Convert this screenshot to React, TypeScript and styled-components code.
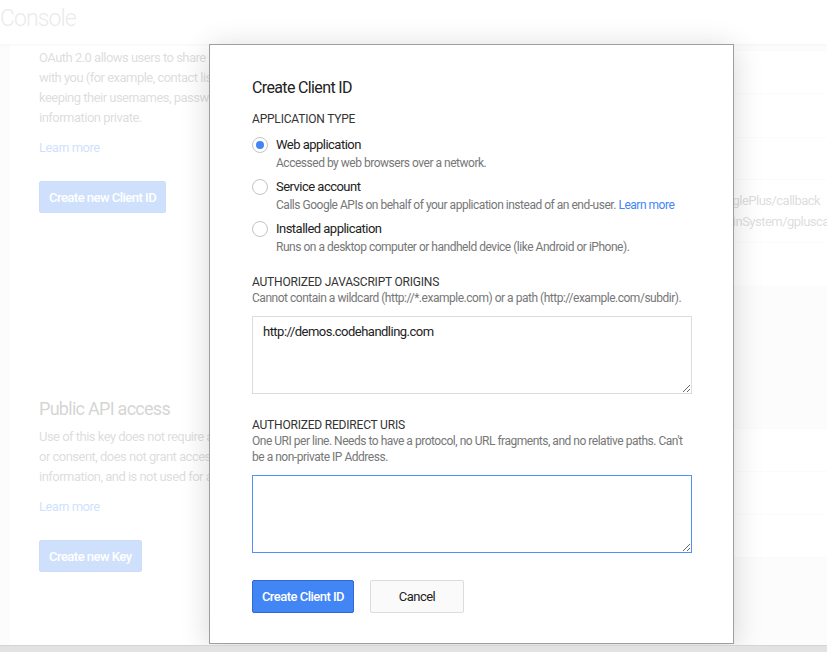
import React, { useState } from 'react';
import styled, { createGlobalStyle } from 'styled-components';

const GlobalStyle = createGlobalStyle`
  html, body {
    margin: 0;
    padding: 0;
    height: 100%;
    overflow: hidden;
  }
  body {
    font-family: Roboto, "Liberation Sans", Arial, sans-serif;
    background: #fff;
    color: #333;
  }
  * {
    letter-spacing: -0.04em;
  }
  #root {
    height: 100%;
  }
`;

const Screen = styled.div`
  height: 100vh;
  display: flex;
  flex-direction: column;
`;

const Viewport = styled.div`
  position: relative;
  flex: 1;
  display: flex;
  flex-direction: column;
  overflow: hidden;
`;

const ScrollBar = styled.div`
  height: 6px;
  background: #e2e2e2;
  border-top: 1px solid #d4d4d4;
`;

const Header = styled.header`
  height: 44px;
  flex: none;
  display: flex;
  align-items: center;
  background: #fff;
  box-shadow: 0 1px 3px rgba(0, 0, 0, 0.12);
  position: relative;
  z-index: 1;
`;

const Brand = styled.div`
  font-weight: 300;
  font-size: 23px;
  color: #aaa;
  margin-top: -8px;
`;

const Main = styled.main`
  flex: 1;
  display: flex;
  background: #f3f3f3;
`;

const LeftColumn = styled.section`
  width: 230px;
  box-sizing: border-box;
  flex: none;
  margin-left: 10px;
  background: #fff;
  padding-left: 29px;
  display: flex;
  flex-direction: column;
`;

const Block = styled.div<{ $top: number }>`
  margin-top: ${(p) => p.$top}px;
  width: 260px;
`;

const BlockTitle = styled.h3`
  margin: 0 0 6px;
  font-size: 18px;
  font-weight: 400;
  color: #555;
  line-height: 24px;
`;

const BlockText = styled.p`
  margin: 0;
  font-size: 13px;
  line-height: 20px;
  color: #777;
  white-space: nowrap;
`;

const BlockLink = styled.a`
  display: block;
  margin-top: 10px;
  font-size: 13px;
  line-height: 20px;
  color: #4285f4;
  text-decoration: none;
`;

const BlockButton = styled.button`
  margin-top: 23px;
  height: 32px;
  padding: 0 9px;
  border: 1px solid #3b78e7;
  border-radius: 2px;
  background: #4285f4;
  color: #fff;
  font-family: inherit;
  font-weight: 500;
  font-size: 13px;
`;

const RightPanel = styled.section`
  flex: 1;
  display: flex;
  flex-direction: column;
`;

const TableCard = styled.div<{ $top: number }>`
  margin-top: ${(p) => p.$top}px;
  background: #fff;
  border-bottom: 1px solid #eee;
`;

const TableRow = styled.div<{ $h: number }>`
  height: ${(p) => p.$h}px;
  box-sizing: border-box;
  border-top: 1px solid #eee;
  display: flex;
  align-items: center;
  padding-left: 311px;
`;

const Cell = styled.div`
  font-size: 13px;
  line-height: 21px;
  color: #777;
  white-space: nowrap;
`;

const Backdrop = styled.div`
  position: absolute;
  inset: 0;
  background: rgba(255, 255, 255, 0.75);
  z-index: 5;
`;

const Dialog = styled.div`
  position: absolute;
  left: 209px;
  top: 44px;
  width: 525px;
  height: 600px;
  box-sizing: border-box;
  background: #fff;
  border: 1px solid #9e9e9e;
  box-shadow: 0 4px 28px rgba(0, 0, 0, 0.16);
  z-index: 10;
  padding: 33px 42px 0;
`;

const DialogTitle = styled.h2`
  margin: 0;
  font-size: 16px;
  font-weight: 400;
  line-height: 20px;
  color: #222;
`;

const SectionLabel = styled.div<{ $top: number }>`
  margin-top: ${(p) => p.$top}px;
  font-size: 12px;
  line-height: 16px;
  letter-spacing: -0.2px;
  color: #333;
  text-transform: uppercase;
`;

const Hint = styled.div`
  font-size: 12px;
  line-height: 16px;
  color: #777;
  white-space: nowrap;
`;

const Options = styled.div`
  margin-top: 8px;
  display: flex;
  flex-direction: column;
  gap: 6px;
`;

const Option = styled.label`
  display: grid;
  grid-template-columns: 16px 1fr;
  column-gap: 8px;
  cursor: pointer;
`;

const Radio = styled.span<{ $on: boolean }>`
  width: 16px;
  height: 16px;
  box-sizing: border-box;
  border-radius: 50%;
  border: 1px solid #c4c4c4;
  margin-top: 2px;
  display: flex;
  align-items: center;
  justify-content: center;
  &::after {
    content: '';
    width: 8px;
    height: 8px;
    border-radius: 50%;
    background: ${(p) => (p.$on ? '#4285f4' : 'transparent')};
  }
`;

const OptionText = styled.div`
  display: flex;
  flex-direction: column;
`;

const OptionName = styled.span`
  font-size: 13px;
  line-height: 20px;
  color: #222;
`;

const InlineLink = styled.a`
  color: #4285f4;
  text-decoration: none;
`;

const TextArea = styled.textarea<{ $focus?: boolean }>`
  display: block;
  margin-top: 10px;
  width: 440px;
  height: 78px;
  box-sizing: border-box;
  padding: 7px 10px;
  border: 1px solid ${(p) => (p.$focus ? '#4d90fe' : '#dcdcdc')};
  border-radius: 0;
  font-family: inherit;
  font-size: 13px;
  line-height: 16px;
  color: #222;
  outline: none;
  resize: both;
`;

const Actions = styled.div`
  margin-top: 27px;
  display: flex;
  gap: 16px;
`;

const PrimaryButton = styled.button`
  height: 33px;
  width: 102px;
  padding: 0;
  border: 1px solid #3367d6;
  border-radius: 2px;
  background: #4285f4;
  color: #fff;
  font-family: inherit;
  font-size: 13px;
  font-weight: 500;
  cursor: pointer;
`;

const SecondaryButton = styled.button`
  height: 33px;
  width: 94px;
  padding: 0;
  border: 1px solid #dcdcdc;
  border-radius: 2px;
  background: #fafafa;
  color: #222;
  font-family: inherit;
  font-size: 13px;
  font-weight: 400;
  cursor: pointer;
`;

const appTypes = [
  { id: 'web', name: 'Web application', hint: 'Accessed by web browsers over a network.' },
  {
    id: 'service',
    name: 'Service account',
    hint: 'Calls Google APIs on behalf of your application instead of an end-user.',
    link: true,
  },
  {
    id: 'installed',
    name: 'Installed application',
    hint: 'Runs on a desktop computer or handheld device (like Android or iPhone).',
  },
];

const clientRows = [
  { h: 43, lines: [] as string[] },
  { h: 44, lines: [] as string[] },
  { h: 42, lines: [] as string[] },
  {
    h: 63,
    lines: [
      'http://localhost/LoginSystem/GooglePlus/callback',
      'http://localhost/codehandling/LoginSystem/gpluscallback',
    ],
  },
  { h: 44, lines: [] as string[] },
];

const keyRows = [43, 43, 43];

const App: React.FC = () => {
  const [appType, setAppType] = useState('web');
  const [origins, setOrigins] = useState('http://demos.codehandling.com');
  const [redirects, setRedirects] = useState('');

  return (
    <Screen>
      <GlobalStyle />
      <Viewport>
        <Header>
          <Brand>Console</Brand>
        </Header>
        <Main>
          <LeftColumn>
            <Block $top={4}>
              <BlockText>OAuth 2.0 allows users to share specific data</BlockText>
              <BlockText>with you (for example, contact lists) while</BlockText>
              <BlockText>keeping their usernames, passwords, and other</BlockText>
              <BlockText>information private.</BlockText>
              <BlockLink href="#">Learn more</BlockLink>
              <BlockButton>Create new Client ID</BlockButton>
            </Block>
            <Block $top={184}>
              <BlockTitle>Public API access</BlockTitle>
              <BlockText>Use of this key does not require any user action</BlockText>
              <BlockText>or consent, does not grant access to any account</BlockText>
              <BlockText>information, and is not used for authorization.</BlockText>
              <BlockLink href="#">Learn more</BlockLink>
              <BlockButton>Create new Key</BlockButton>
            </Block>
          </LeftColumn>
          <RightPanel>
            <TableCard $top={6}>
              {clientRows.map((r, i) => (
                <TableRow key={i} $h={r.h}>
                  <div>
                    {r.lines.map((l) => (
                      <Cell key={l}>{l}</Cell>
                    ))}
                  </div>
                </TableRow>
              ))}
            </TableCard>
            <TableCard $top={141}>
              {keyRows.map((h, i) => (
                <TableRow key={i} $h={h} />
              ))}
            </TableCard>
          </RightPanel>
        </Main>
        <Backdrop />
        <Dialog>
          <DialogTitle>Create Client ID</DialogTitle>
          <SectionLabel $top={13}>Application type</SectionLabel>
          <Options>
            {appTypes.map((t) => (
              <Option key={t.id} onClick={() => setAppType(t.id)}>
                <Radio $on={appType === t.id} />
                <OptionText>
                  <OptionName>{t.name}</OptionName>
                  <Hint>
                    {t.hint}
                    {t.link && (
                      <>
                        {' '}
                        <InlineLink href="#">Learn more</InlineLink>
                      </>
                    )}
                  </Hint>
                </OptionText>
              </Option>
            ))}
          </Options>
          <SectionLabel $top={19}>Authorized JavaScript origins</SectionLabel>
          <Hint>Cannot contain a wildcard (http://*.example.com) or a path (http://example.com/subdir).</Hint>
          <TextArea value={origins} onChange={(e) => setOrigins(e.target.value)} />
          <SectionLabel $top={23}>Authorized redirect URIs</SectionLabel>
          <Hint>
            One URI per line. Needs to have a protocol, no URL fragments, and no relative paths. Can't
            <br />
            be a non-private IP Address.
          </Hint>
          <TextArea $focus value={redirects} onChange={(e) => setRedirects(e.target.value)} />
          <Actions>
            <PrimaryButton>Create Client ID</PrimaryButton>
            <SecondaryButton>Cancel</SecondaryButton>
          </Actions>
        </Dialog>
      </Viewport>
      <ScrollBar />
    </Screen>
  );
};

export default App;
